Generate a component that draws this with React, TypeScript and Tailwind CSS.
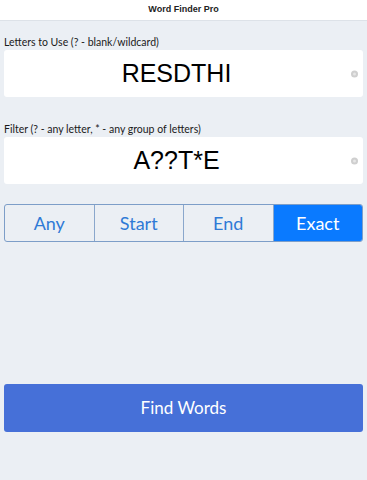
import React from "react";

function Field({ label, value }: { label: string; value: string }) {
  return (
    <div className="flex flex-col">
      <div className="px-[4px] text-[10.5px] leading-[14px] text-[#1a1a1a]" style={{ fontFamily: "Lato, 'Open Sans', sans-serif" }}>
        {label}
      </div>
      <div className="mx-[4px] mt-[1px] h-[47px] bg-white rounded-[3px] relative flex items-center justify-center pr-[14px]">
        <span className="text-[25px] text-black leading-none" style={{ fontFamily: "'Liberation Sans', Arial, sans-serif" }}>
          {value}
        </span>
        <span className="absolute right-[5px] top-1/2 -translate-y-1/2 w-[7px] h-[7px] rounded-full bg-[#cfcfcf] flex items-center justify-center">
          <span className="w-[3px] h-[3px] rounded-full bg-[#e6e6e6]" />
        </span>
      </div>
    </div>
  );
}

export default function App() {
  const segs = ["Any", "Start", "End", "Exact"];
  return (
    <div className="w-[367px] h-[480px] bg-[#ebeff4] flex flex-col" style={{ fontFamily: "Lato, 'Open Sans', sans-serif" }}>
      <div className="h-[21px] bg-white border-b border-[#dde2e8] flex items-center justify-center">
        <span className="text-[9px] font-bold text-[#222]" style={{ fontFamily: "'Liberation Sans', Arial, sans-serif" }}>Word Finder Pro</span>
      </div>
      <div className="mt-[14px]">
        <Field label="Letters to Use (? - blank/wildcard)" value="RESDTHI" />
      </div>
      <div className="mt-[25px]">
        <Field label="Filter (? - any letter, * - any group of letters)" value="A??T*E" />
      </div>
      <div className="mx-[4px] mt-[20px] h-[38px] flex border border-[#7d9ec8] rounded-[3px] overflow-hidden">
        {segs.map((s, i) => (
          <div
            key={s}
            className={
              i === 3
                ? "flex-1 flex items-center justify-center bg-[#0a7aff] text-white text-[18px]"
                : "flex-1 flex items-center justify-center border-r border-[#8aa7cc] text-[#2f7ad6] text-[18px]"
            }
          >
            {s}
          </div>
        ))}
      </div>
      <div className="flex-1" />
      <div className="mx-[4px] mb-[48px] h-[48px] bg-[#4670d8] rounded-[3px] flex items-center justify-center text-white text-[17px]">
        Find Words
      </div>
    </div>
  );
}
